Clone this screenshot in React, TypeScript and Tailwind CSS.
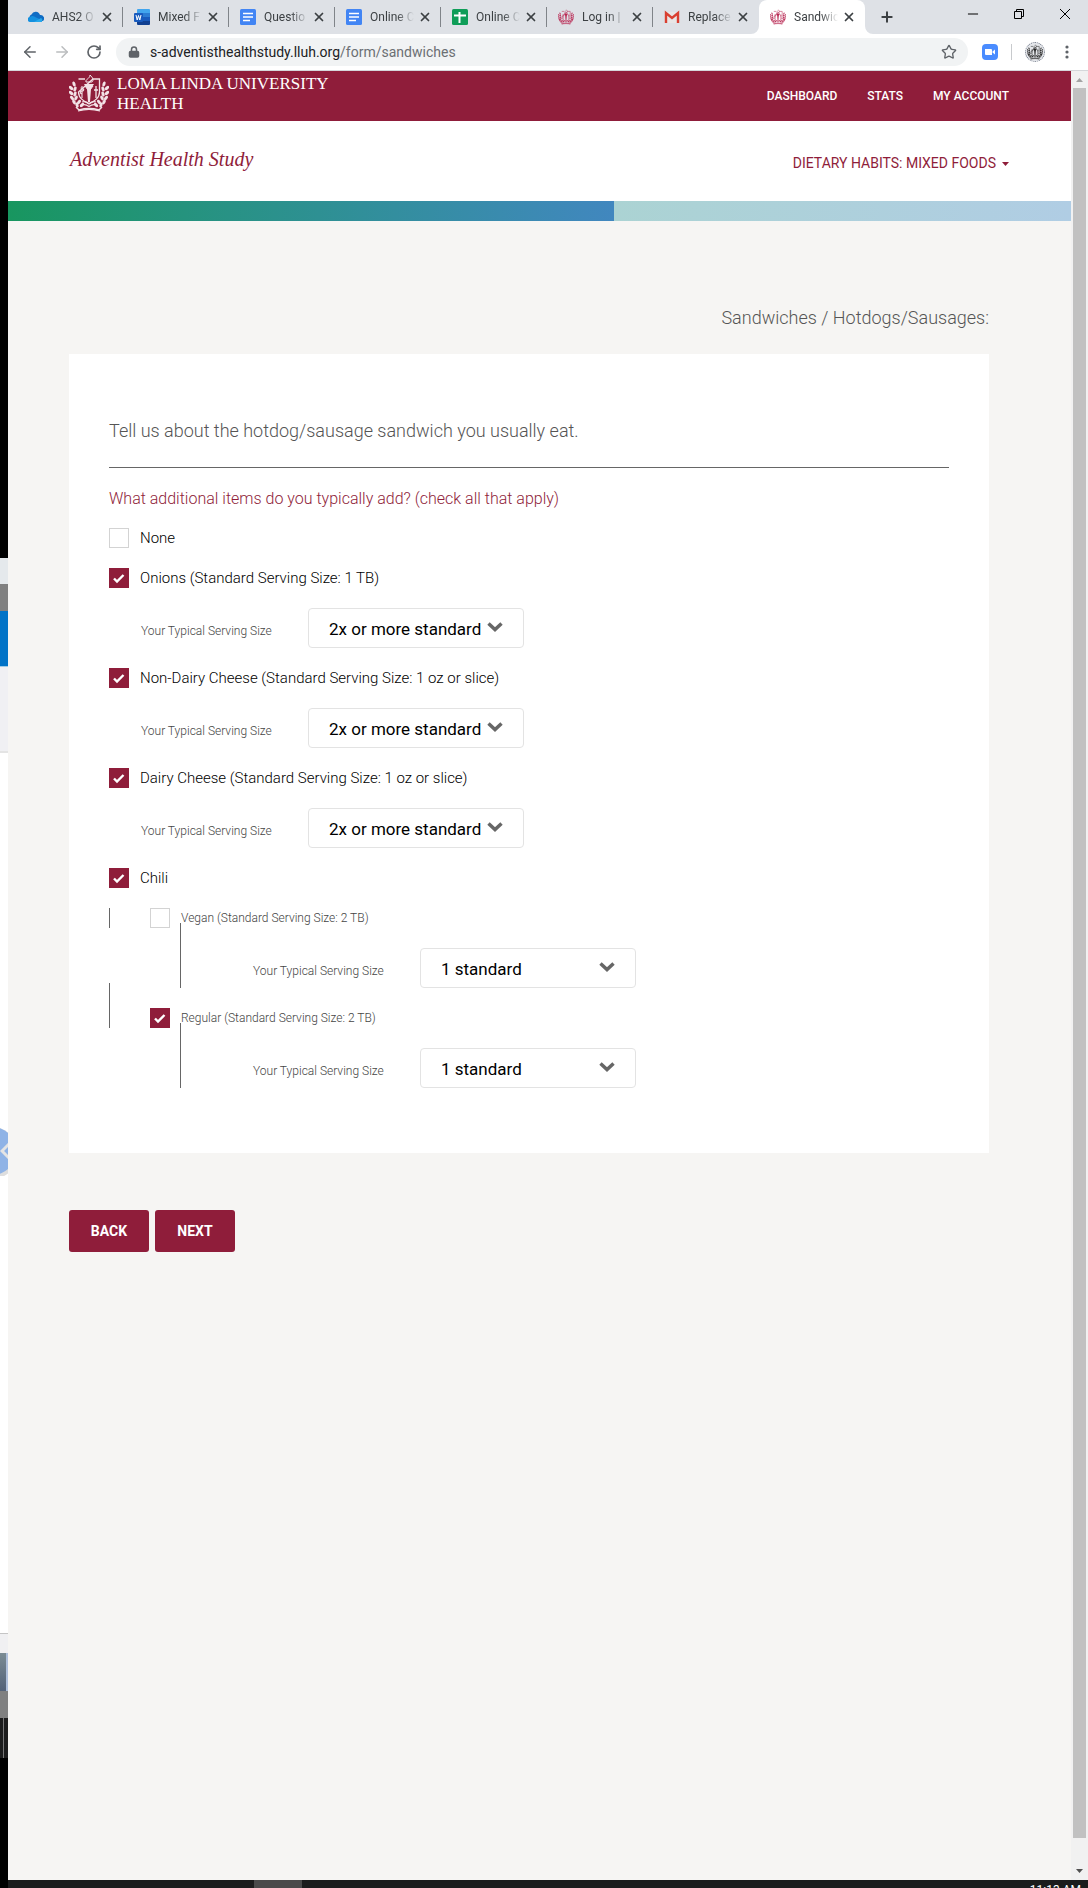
import { ArrowLeft, ArrowRight, Lock, Minus, Plus, RotateCw, Star, X } from "lucide-react"
import type { ReactNode } from "react"

const leftLeaves = [
    [5, 10, -20], [2, 14, -50], [6, 15, 20], [2, 19, -50], [6, 20, 20], [3, 24, -40],
    [7, 24, 30], [5, 28, -30], [10, 28, 40], [8, 31, -20], [13, 31, 50],
]

function Crest({ className }: { className: string }) {
    return (
        <svg viewBox="0 0 40 38" className={className} fill="none" stroke="currentColor" aria-hidden="true">
            <g fill="currentColor" stroke="none">
                {leftLeaves.map(([x, y, r]) => (
                    <ellipse key={`l${x}-${y}`} cx={x} cy={y} rx="1.5" ry="2.6" transform={`rotate(${r} ${x} ${y})`} />
                ))}
                {leftLeaves.map(([x, y, r]) => (
                    <ellipse key={`r${x}-${y}`} cx={40 - x} cy={y} rx="1.5" ry="2.6" transform={`rotate(${-r} ${40 - x} ${y})`} />
                ))}
            </g>
            <path d="M9.500 5H16M24 5h6.500V18c0 6-5 9-10.500 12C14.500 27 9.500 24 9.500 18Z" strokeWidth="1.300" />
            <path d="M15 10h10l-3 5-1 13h-2l-1-13Z" fill="currentColor" stroke="none" />
            <path d="M17 8c-1-3 4-3 4-7 3 3 4 5 2 7Z" strokeWidth="1" />
            <path d="M16 12l3 4M24 12l-3 4" />
            <path d="M27 12v12M25 16h4" strokeWidth="1.300" />
            <path d="M13 12v12M11.500 14c4 0 4 3 1.500 3s-2 3 0 3" strokeWidth="1.100" />
            <path d="M13 28c3-1 5 0 7 1.500 2-1.500 4-2.500 7-1.500M13 31c3-1 5 0 7 1.500 2-1.500 4-2.500 7-1.500" strokeWidth="1.200" />
            <path d="M7 33l3 3c7-2 13-2 20 0l3-3" strokeWidth="1.500" />
            <path d="M9 37c7-2 15-2 22 0" strokeWidth="1.200" />
        </svg>
    )
}

function CloudIcon() {
    return (
        <svg viewBox="0 0 16 16" className="size-4 shrink-0" aria-hidden="true">
            <path d="M3 11a3 3 0 0 1 .5-5.500A4.500 4.500 0 0 1 12 6a3.500 3.500 0 0 1 3 6Z" fill="#0f6cc4" />
            <path d="M2.500 13a2.500 2.500 0 0 1-.5-5c2-1.500 4-1 6 .5l3.500 1.500A3 3 0 0 1 14 13Z" fill="#1490df" />
            <path d="M6 13l7-4a2.500 2.500 0 0 1 .5 4Z" fill="#28a8ea" />
        </svg>
    )
}

function WordIcon() {
    return (
        <svg viewBox="0 0 16 16" className="size-4 shrink-0" aria-hidden="true">
            <path d="M4 0h11a1 1 0 0 1 1 1v3H3V1a1 1 0 0 1 1-1Z" fill="#41a5ee" />
            <path d="M3 4h13v4H3z" fill="#2b7cd3" />
            <path d="M3 8h13v4H3z" fill="#185abd" />
            <path d="M3 12h13v3a1 1 0 0 1-1 1H4a1 1 0 0 1-1-1Z" fill="#103f91" />
            <rect y="4" width="9" height="9" rx="1" fill="#185abd" />
            <path d="M2 6l1.200 5L4.500 6.500 5.800 11 7 6" fill="none" stroke="#fff" />
        </svg>
    )
}

function DocsIcon() {
    return (
        <svg viewBox="0 0 16 16" className="size-4 shrink-0" aria-hidden="true">
            <rect width="16" height="16" rx="1.500" fill="#4285f4" />
            <path d="M3 4.500h10M3 8h10M3 11.500h7" stroke="#fff" strokeWidth="1.600" />
        </svg>
    )
}

function SheetsIcon() {
    return (
        <svg viewBox="0 0 16 16" className="size-4 shrink-0" aria-hidden="true">
            <rect width="16" height="16" rx="1.500" fill="#0f9d58" />
            <path d="M2 6.500h12M7.500 3v11" stroke="#fff" strokeWidth="2" />
        </svg>
    )
}

function MailIcon() {
    return (
        <svg viewBox="0 0 16 16" className="size-4 shrink-0" aria-hidden="true">
            <path d="M1 3h14v11H1z" fill="#e8e6e6" />
            <path d="M2 14V4l6 5 6-5v10" fill="none" stroke="#d93f31" strokeWidth="2.400" />
        </svg>
    )
}

const crestIcon = <Crest className="size-4 shrink-0 text-[#b92a54]" />

const tabs: { id: string; title: string; icon: ReactNode; active?: boolean; divider?: boolean }[] = [
    { id: "ahs2", title: "AHS2 O", icon: <CloudIcon />, divider: true },
    { id: "mixed", title: "Mixed F", icon: <WordIcon />, divider: true },
    { id: "questions", title: "Questio", icon: <DocsIcon />, divider: true },
    { id: "doc", title: "Online C", icon: <DocsIcon />, divider: true },
    { id: "sheet", title: "Online C", icon: <SheetsIcon />, divider: true },
    { id: "login", title: "Log in |", icon: crestIcon, divider: true },
    { id: "mail", title: "Replace", icon: <MailIcon /> },
    { id: "sandwiches", title: "Sandwic", icon: crestIcon, active: true },
]

function TabStrip() {
    return (
        <div className="flex h-[34px] items-stretch bg-[#dee1e6] pl-[9px] text-[#3c4043]">
            {tabs.map(tab => (
                <div
                    key={tab.id}
                    className={`relative flex w-[106px] min-w-0 items-center ${tab.active ? "rounded-t-lg bg-white" : ""}`}
                >
                    {tab.active && (
                        <>
                            <svg viewBox="0 0 8 8" className="absolute bottom-0 -left-2 size-2" aria-hidden="true">
                                <path d="M8 0v8H0a8 8 0 0 0 8-8Z" fill="#fff" />
                            </svg>
                            <svg viewBox="0 0 8 8" className="absolute -right-2 bottom-0 size-2" aria-hidden="true">
                                <path d="M0 0v8h8a8 8 0 0 1-8-8Z" fill="#fff" />
                            </svg>
                        </>
                    )}
                    <a href="#" className="flex min-w-0 flex-1 items-center gap-2 pl-[11px]">
                        {tab.icon}
                        <span className="min-w-0 flex-1 overflow-hidden text-xs whitespace-nowrap [mask-image:linear-gradient(to_right,black_60%,transparent)]">
                            {tab.title}
                        </span>
                    </a>
                    <button type="button" aria-label={`Close ${tab.title}`} className="mr-[9px] ml-1">
                        <X className="size-3.5" strokeWidth={3} />
                    </button>
                    {tab.divider && <span className="-ml-px h-5 w-px bg-[#808489]" />}
                </div>
            ))}
            <button type="button" aria-label="New tab" className="ml-3.5">
                <Plus className="size-4" strokeWidth={3} />
            </button>
            <div className="ml-auto flex items-center gap-[30px] pr-[15px] pb-1.5 text-black">
                <button type="button" aria-label="Minimize">
                    <Minus className="size-4" strokeWidth={1.5} />
                </button>
                <button type="button" aria-label="Restore">
                    <svg viewBox="0 0 16 16" className="size-4" fill="none" stroke="currentColor" aria-hidden="true">
                        <path d="M3.500 5.500h7v7h-7zM5.500 5V3.500h7v7H11" />
                    </svg>
                </button>
                <button type="button" aria-label="Close window">
                    <svg viewBox="0 0 16 16" className="size-4" fill="none" stroke="currentColor" aria-hidden="true">
                        <path d="M3 3l10 10M13 3L3 13" />
                    </svg>
                </button>
            </div>
        </div>
    )
}

function Toolbar() {
    return (
        <div className="flex h-[37px] items-center border-b border-[#d5d7da] bg-white px-[13px] text-[#5f6368]">
            <button type="button" aria-label="Back">
                <ArrowLeft className="size-[18px]" />
            </button>
            <button type="button" aria-label="Forward" className="ml-[14px] text-[#bbbdbf]">
                <ArrowRight className="size-[18px]" />
            </button>
            <button type="button" aria-label="Reload" className="ml-[15px]">
                <RotateCw className="size-4" strokeWidth={2.5} />
            </button>
            <div className="ml-[14px] flex h-7 flex-1 items-center rounded-full bg-[#f1f3f4] pr-[11px] pl-3">
                <Lock className="size-3 shrink-0 [&>rect]:fill-current" strokeWidth={3} />
                <p className="ml-2.5 flex-1 text-sm text-[#6b6f73]">
                    <span className="text-[#202124]">s-adventisthealthstudy.lluh.org</span>/form/sandwiches
                </p>
                <button type="button" aria-label="Bookmark this page">
                    <Star className="size-4" />
                </button>
            </div>
            <button type="button" aria-label="Zoom" className="ml-[14px] flex size-4 items-center justify-center rounded bg-[#4a8cff]">
                <svg viewBox="0 0 12 8" className="h-2 w-3 fill-white" aria-hidden="true">
                    <path d="M1 1h6a1 1 0 0 1 1 1v5H2a1 1 0 0 1-1-1ZM8.500 3.500 11 1.500v5L8.500 4.500Z" />
                </svg>
            </button>
            <span className="mx-[13px] h-4 w-px bg-[#c8cacd]" />
            <button type="button" aria-label="Profile" className="flex size-5 items-center justify-center rounded-full border border-dotted border-gray-500 bg-gray-200">
                <Crest className="size-4 text-neutral-800" />
            </button>
            <button type="button" aria-label="Menu" className="ml-[14px]">
                <svg viewBox="0 0 16 16" className="size-4 fill-current" aria-hidden="true">
                    <circle cx="8" cy="3" r="1.600" />
                    <circle cx="8" cy="8" r="1.600" />
                    <circle cx="8" cy="13" r="1.600" />
                </svg>
            </button>
        </div>
    )
}

function SiteHeader() {
    return (
        <header>
            <div className="flex h-[50px] items-center justify-between bg-[#8f1d3a] pr-[62px] pl-[61px] text-white">
                <a href="#" className="flex items-center gap-2 pb-1">
                    <Crest className="mb-0.5 h-[38px] w-10 text-[#f3e3e7]" />
                    <span className="font-['Liberation_Serif',serif] text-[17px] leading-5">
                        LOMA LINDA UNIVERSITY
                        <br />
                        HEALTH
                    </span>
                </a>
                <nav className="flex gap-[30px] text-xs font-medium">
                    <a href="#">DASHBOARD</a>
                    <a href="#">STATS</a>
                    <a href="#">MY ACCOUNT</a>
                </nav>
            </div>
            <div className="flex h-20 items-center justify-between bg-white pr-[62px] pl-[62px] text-[#8f1d3a]">
                <p className="pb-1 font-['Liberation_Serif',serif] text-xl italic">Adventist Health Study</p>
                <button type="button" className="flex items-center gap-1.5 pt-1 text-sm">
                    DIETARY HABITS: MIXED FOODS
                    <svg viewBox="0 0 7 4" className="mt-0.5 h-1 w-[7px] fill-current" aria-hidden="true">
                        <path d="M0 0h7L3.500 4Z" />
                    </svg>
                </button>
            </div>
            <div className="flex h-5 bg-linear-to-r from-[#abd3d3] from-57% to-[#b0cde4]">
                <div className="w-[57%] bg-linear-to-r from-[#18965f] to-[#4187bf]" />
            </div>
        </header>
    )
}

function CheckRow({ id, label, checked, small }: { id: string; label: string; checked?: boolean; small?: boolean }) {
    return (
        <div className="flex h-5 items-center gap-[11px]">
            <span className="grid size-5 shrink-0">
                <input
                    id={id}
                    type="checkbox"
                    defaultChecked={checked}
                    className="peer col-start-1 row-start-1 size-5 appearance-none border border-[#d3d3d3] bg-white checked:border-[#8f1d3a] checked:bg-[#8f1d3a]"
                />
                <svg
                    viewBox="0 0 20 20"
                    className="pointer-events-none col-start-1 row-start-1 hidden size-5 peer-checked:block"
                    fill="none"
                    stroke="#fff"
                    strokeWidth="2.400"
                    aria-hidden="true"
                >
                    <path d="M5 10.500l3 3 6.500-6.500" />
                </svg>
            </span>
            <label htmlFor={id} className={small ? "text-xs font-light text-[#444]" : "text-[15px] font-light text-black"}>
                {label}
            </label>
        </div>
    )
}

function ServingSelect({ id, value }: { id: string; value: string }) {
    return (
        <div className="flex items-center">
            <label htmlFor={id} className="w-[167px] shrink-0 pt-1.5 text-xs font-light text-[#444]">
                Your Typical Serving Size
            </label>
            <div className="grid w-[216px] items-center">
                <select
                    id={id}
                    defaultValue={value}
                    className="col-start-1 row-start-1 h-10 w-full appearance-none rounded border border-[#e3e3e3] bg-white pt-1 pl-5 text-[17px] text-black"
                >
                    <option>1 standard</option>
                    <option>2x or more standard</option>
                </select>
                <svg
                    viewBox="0 0 16 10"
                    className="pointer-events-none col-start-1 row-start-1 mr-[21px] mb-0.5 h-2.5 w-4 justify-self-end"
                    fill="none"
                    stroke="#666"
                    strokeWidth="3.500"
                    aria-hidden="true"
                >
                    <path d="M1.500 1.500 8 7.500l6.500-6" />
                </svg>
            </div>
        </div>
    )
}

const items = [
    { id: "onions", label: "Onions (Standard Serving Size: 1 TB)" },
    { id: "non-dairy", label: "Non-Dairy Cheese (Standard Serving Size: 1 oz or slice)" },
    { id: "dairy", label: "Dairy Cheese (Standard Serving Size: 1 oz or slice)" },
]

const chiliTypes = [
    { id: "vegan", label: "Vegan (Standard Serving Size: 2 TB)", checked: false, line: "h-5" },
    { id: "regular", label: "Regular (Standard Serving Size: 2 TB)", checked: true, line: "-mt-[25px] h-[45px]" },
]

function SandwichForm() {
    return (
        <form className="px-[61px] pt-[83px]">
            <div className="mr-[21px]">
                <h1 className="mb-[22px] text-right text-lg leading-7 font-light text-[#555]">
                    Sandwiches / Hotdogs/Sausages:
                </h1>
                <section className="bg-white px-10 pt-[65px] pb-[65px]">
                    <p className="border-b border-[#666] pb-6 text-lg leading-6 font-light text-[#555]">
                        Tell us about the hotdog/sausage sandwich you usually eat.
                    </p>
                    <fieldset className="mt-[19px] flex flex-col gap-5">
                        <legend className="mb-[17px] text-base leading-6 font-light text-[#8f1d3a]">
                            What additional items do you typically add? (check all that apply)
                        </legend>
                        <CheckRow id="none" label="None" />
                        {items.map(item => (
                            <div key={item.id} className="flex flex-col gap-5">
                                <CheckRow id={item.id} label={item.label} checked />
                                <div className="pl-8">
                                    <ServingSelect id={`${item.id}-size`} value="2x or more standard" />
                                </div>
                            </div>
                        ))}
                        <CheckRow id="chili" label="Chili" checked />
                        {chiliTypes.map(type => (
                            <div key={type.id} className="flex">
                                <span className={`w-[41px] shrink-0 border-l border-[#666] ${type.line}`} />
                                <div className="relative flex flex-col gap-5">
                                    <CheckRow id={type.id} label={type.label} checked={type.checked} small />
                                    <div className="pl-[103px]">
                                        <ServingSelect id={`${type.id}-size`} value="1 standard" />
                                    </div>
                                    <span className="absolute top-[15px] bottom-0 left-[30px] w-px bg-[#666]" />
                                </div>
                            </div>
                        ))}
                    </fieldset>
                </section>
            </div>
            <div className="mt-[57px] flex gap-1.5 text-sm font-bold text-white">
                <button type="button" className="h-[42px] w-20 rounded-[3px] bg-[#8f1d3a]">BACK</button>
                <button type="button" className="h-[42px] w-20 rounded-[3px] bg-[#8f1d3a]">NEXT</button>
            </div>
        </form>
    )
}

function Scrollbar() {
    return (
        <div className="flex w-[17px] shrink-0 flex-col items-center bg-[#f1f1f1]" aria-hidden="true">
            <svg viewBox="0 0 7 4" className="mt-[7px] mb-1.5 h-1 w-[7px] fill-[#a3a3a3]">
                <path d="M0 4h7L3.500 0Z" />
            </svg>
            <span className="w-[13px] flex-1 bg-[#c1c1c1]" />
            <svg viewBox="0 0 7 4" className="mt-[31px] mb-[7px] h-1 w-[7px] fill-[#505050]">
                <path d="M0 0h7L3.500 4Z" />
            </svg>
        </div>
    )
}

// slice of the windows that lie behind the browser
function DesktopEdge() {
    return (
        <div className="flex w-2 shrink-0 flex-col bg-black" aria-hidden="true">
            <span className="mt-[558px] h-[26px] bg-[#e5e9ec]" />
            <span className="h-[27px] bg-[#808080]" />
            <span className="h-[55px] bg-[#0173c7]" />
            <span className="h-[87px] border-t border-b-2 border-t-[#9fcbe6] border-b-[#e4e4e4] bg-[#f0f0f3]" />
            <span className="h-[373px] bg-white" />
            <svg viewBox="0 0 8 50" className="h-[50px] w-2 bg-white">
                <circle cx="-8" cy="27" r="26" fill="#dedede" />
                <circle cx="-8" cy="25" r="24" fill="#8fb3e6" />
                <path d="M9 18 2 25l7 7" fill="none" stroke="#e4e4e4" strokeWidth="3" />
            </svg>
            <span className="h-[457px] bg-white" />
            <span className="h-5 border-t border-[#c5c5c5] bg-[#f0f0f2]" />
            <span className="h-[38px] border-r-2 border-[#aebfda] bg-linear-to-b from-[#7b8c94] to-[#536278]" />
            <span className="h-[27px] bg-[#808080]" />
            <span className="h-10 bg-[#1c1c1c]">
                <span className="ml-[3px] block h-full w-px bg-[#777]" />
            </span>
        </div>
    )
}

export default function App() {
    return (
        <div className="flex min-h-screen bg-black font-['Roboto',sans-serif]">
            <DesktopEdge />
            <div className="flex min-w-0 flex-1 flex-col">
                <TabStrip />
                <Toolbar />
                <div className="flex flex-1">
                    <main className="min-w-0 flex-1 bg-[#f6f5f3]">
                        <SiteHeader />
                        <SandwichForm />
                    </main>
                    <Scrollbar />
                </div>
                {/* only the top of the taskbar is in view */}
                <div className="flex h-2 overflow-hidden bg-[#1b1c1c]">
                    <span className="ml-[246px] w-12 bg-[#4a4a4a]" />
                    <span className="mt-0.5 mr-[7px] ml-auto text-xs text-white">11:13 AM</span>
                </div>
            </div>
        </div>
    )
}
